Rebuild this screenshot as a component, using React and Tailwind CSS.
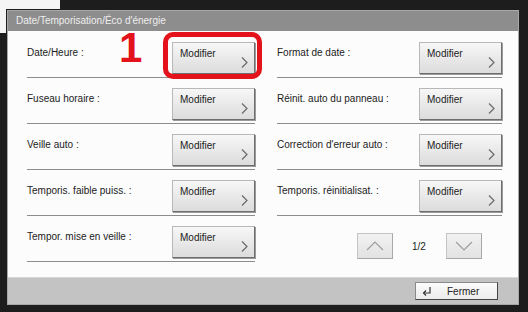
import React from "react";

const font = { fontFamily: '"Liberation Sans", Arial, sans-serif' };

function Chevron() {
  return (
    <svg width="7" height="11" viewBox="0 0 7 11" className="absolute right-[6px] bottom-[5px]">
      <polyline points="1,0.5 6,5.5 1,10.5" fill="none" stroke="#6a6a6a" strokeWidth="1.2" />
    </svg>
  );
}

function ModBtn() {
  return (
    <div className="relative w-[83px] h-[32px] shrink-0 border border-t-[#b8b8b8] border-l-[#b8b8b8] border-r-[#6e6e6e] border-b-[#6e6e6e] bg-gradient-to-b from-[#f7f7f7] to-[#dcdcdc] shadow-[1px_1px_0_#9a9a9a]">
      <span className="absolute left-[7px] top-[3px] text-[10px] text-[#222]">Modifier</span>
      <Chevron />
    </div>
  );
}

function Row({ label, first }) {
  return (
    <div className={first ? "flex flex-col pt-[11px]" : "flex flex-col pt-[10px]"}>
      <div className="flex items-start justify-between">
        <span className="pt-[3px] text-[10px] text-[#222]">{label}</span>
        <ModBtn />
      </div>
      <div className="mt-[3px] h-[1px] bg-[#8c8c8c]" />
    </div>
  );
}

function NavBtn({ up }) {
  return (
    <div className="w-[36px] h-[26px] flex items-center justify-center border border-[#c4c4c4] border-r-[#a8a8a8] border-b-[#a8a8a8] bg-gradient-to-b from-[#f2f2f2] to-[#e2e2e2]">
      <svg width="18" height="10" viewBox="0 0 18 10">
        <polyline
          points={up ? "1,9 9,1 17,9" : "1,1 9,9 17,1"}
          fill="none"
          stroke="#9c9c9c"
          strokeWidth="1.1"
        />
      </svg>
    </div>
  );
}

export default function App() {
  const left = ["Date/Heure :", "Fuseau horaire :", "Veille auto :", "Temporis. faible puiss. :", "Tempor. mise en veille :"];
  const right = ["Format de date :", "Réinit. auto du panneau :", "Correction d'erreur auto :", "Temporis. réinitialisat. :"];
  return (
    <div className="relative w-[528px] h-[312px] bg-[#1d1d1d] pt-[10px] pl-[7px] pr-[9px] pb-[7px] overflow-hidden" style={font}>
      <div className="absolute left-0 top-0 w-[60px] h-[9px] bg-[#f4f4f4]" />
      <div className="absolute left-0 top-0 w-[6px] h-[33px] bg-[#f4f4f4]" />
      <div className="flex flex-col w-full h-full border border-[#a8a8a8] bg-white">
        <div className="h-[20px] shrink-0 bg-[#8d8d8d] text-[#ededed] text-[10px] leading-[20px] pl-[8px]">
          Date/Temporisation/Éco d'énergie
        </div>
        <div className="flex-1 flex bg-[#fcfcfc] pl-[19px] pr-[16px] gap-[22px]">
          <div className="w-[228px] flex flex-col">
            {left.map((l, i) => (
              <Row key={l} label={l} first={i === 0} />
            ))}
          </div>
          <div className="flex-1 flex flex-col">
            {right.map((l, i) => (
              <Row key={l} label={l} first={i === 0} />
            ))}
            <div className="flex items-center pl-[80px] mt-[17px]">
              <NavBtn up />
              <span className="ml-[19px] mr-[20px] text-[10px] text-[#222]">1/2</span>
              <NavBtn />
            </div>
          </div>
        </div>
        <div className="h-[27px] shrink-0 bg-[#c3c3c3] border-t border-[#d8d8d8] flex items-center justify-end pr-[20px]">
          <div className="relative w-[83px] h-[18px] bg-gradient-to-b from-[#fbfbfb] to-[#ececec] border border-[#8a8a8a] border-r-[#444] border-b-[#444] flex items-center">
            <svg width="10" height="9" viewBox="0 0 10 9" className="ml-[6px]">
              <polyline points="8,0 8,6 2,6" fill="none" stroke="#333" strokeWidth="1.2" />
              <polyline points="4,3.5 1.5,6 4,8.5" fill="none" stroke="#333" strokeWidth="1.2" />
            </svg>
            <span className="ml-[15px] text-[10px] text-[#222]">Fermer</span>
          </div>
        </div>
      </div>
      <div className="absolute left-[163px] top-[32px] w-[99px] h-[47px] border-[5px] border-[#e3121b] rounded-[10px]" />
      <div className="absolute left-[119px] top-[27px] text-[42px] font-bold text-[#e3121b] leading-none">1</div>
    </div>
  );
}
